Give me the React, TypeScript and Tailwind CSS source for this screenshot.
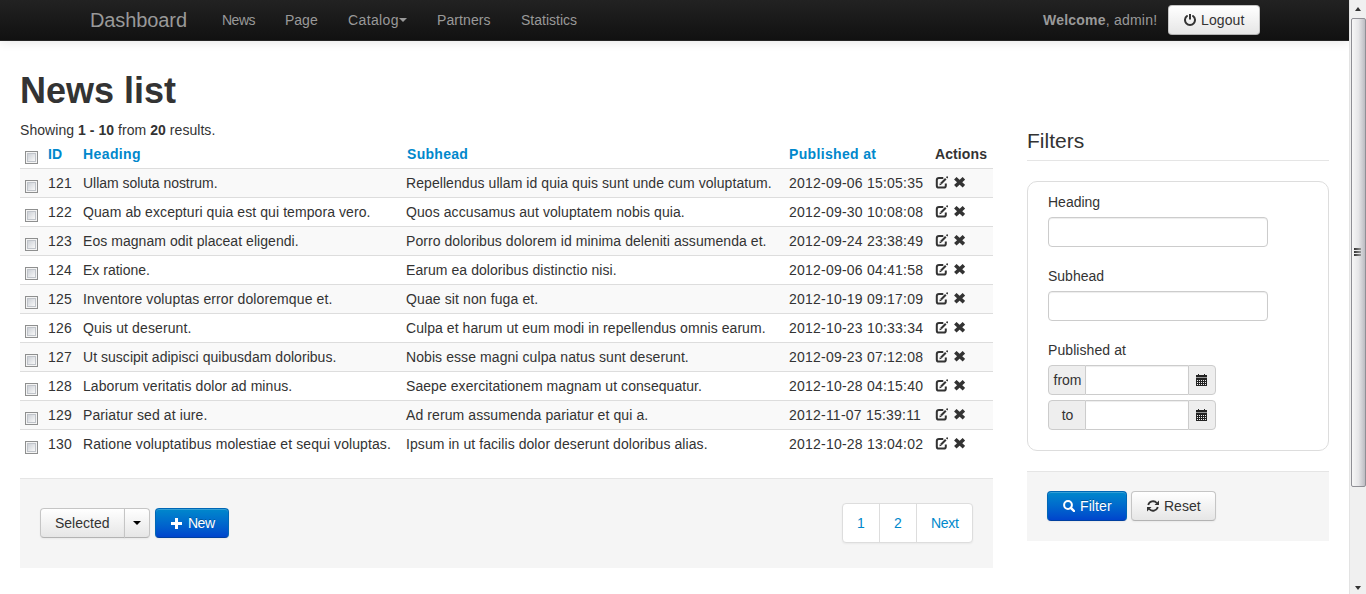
import type { ReactNode } from 'react'

type Cell = [text: string, tracking: string]

const rows: [string, Cell, Cell, string][] = [
  ['121', ['Ullam soluta nostrum.', 'tracking-[-0.04px]'], ['Repellendus ullam id quia quis sunt unde cum voluptatum.', 'tracking-[0.07px]'], '2012-09-06 15:05:35'],
  ['122', ['Quam ab excepturi quia est qui tempora vero.', 'tracking-[0.08px]'], ['Quos accusamus aut voluptatem nobis quia.', 'tracking-[0.08px]'], '2012-09-30 10:08:08'],
  ['123', ['Eos magnam odit placeat eligendi.', 'tracking-[0.05px]'], ['Porro doloribus dolorem id minima deleniti assumenda et.', 'tracking-[0.06px]'], '2012-09-24 23:38:49'],
  ['124', ['Ex ratione.', 'tracking-normal'], ['Earum ea doloribus distinctio nisi.', 'tracking-[0.06px]'], '2012-09-06 04:41:58'],
  ['125', ['Inventore voluptas error doloremque et.', 'tracking-[0.11px]'], ['Quae sit non fuga et.', 'tracking-[0.11px]'], '2012-10-19 09:17:09'],
  ['126', ['Quis ut deserunt.', 'tracking-[0.11px]'], ['Culpa et harum ut eum modi in repellendus omnis earum.', 'tracking-[0.06px]'], '2012-10-23 10:33:34'],
  ['127', ['Ut suscipit adipisci quibusdam doloribus.', 'tracking-[0.03px]'], ['Nobis esse magni culpa natus sunt deserunt.', 'tracking-[0.08px]'], '2012-09-23 07:12:08'],
  ['128', ['Laborum veritatis dolor ad minus.', 'tracking-[0.07px]'], ['Saepe exercitationem magnam ut consequatur.', 'tracking-[0.06px]'], '2012-10-28 04:15:40'],
  ['129', ['Pariatur sed at iure.', 'tracking-[0.11px]'], ['Ad rerum assumenda pariatur et qui a.', 'tracking-[0.09px]'], '2012-11-07 15:39:11'],
  ['130', ['Ratione voluptatibus molestiae et sequi voluptas.', 'tracking-[0.09px]'], ['Ipsum in ut facilis dolor deserunt doloribus alias.', 'tracking-[0.07px]'], '2012-10-28 13:04:02'],
]

const lightBtn =
  'flex h-[30px] items-center border border-[#c5c5c5] border-b-[#b3b3b3] bg-linear-to-b from-white to-[#e6e6e6] text-[#333] shadow-[inset_0_1px_0_rgba(255,255,255,.2),0_1px_2px_rgba(0,0,0,.05)]'
const blueBtn =
  'flex h-[30px] items-center rounded-[4px] border border-[#0067b5] border-b-[#003fa0] bg-linear-to-b from-[#0088cc] to-[#0044cc] text-white shadow-[inset_0_1px_0_rgba(255,255,255,.2),0_1px_2px_rgba(0,0,0,.05)] [text-shadow:0_-1px_0_rgba(0,0,0,.25)]'

function PowerIcon() {
  return (
    <svg className="h-3 w-3" viewBox="0 0 12 12" fill="none" stroke="currentColor" strokeWidth="2">
      <path d="M3 2A5 5 0 1 0 9 2" strokeLinecap="round" />
      <path d="M6 0V5.6" strokeWidth="2" />
    </svg>
  )
}

function EditIcon() {
  return (
    <svg className="h-[13px] w-[13px]" viewBox="0 0 13 13" fill="none" stroke="currentColor">
      <path d="M8.3 2H4Q1.8 2 1.8 4V9.4Q1.8 11.6 4 11.6H8.6Q10.8 11.6 10.8 9.4V7.4" strokeWidth="2" />
      <path d="M6 7.5L10.8 2.7" strokeWidth="2" />
      <path d="M11.6 1.9L12.8 .7" strokeWidth="1.8" />
      <path d="M4.4 9.2L4.9 6.9L6.8 8.7Z" fill="currentColor" stroke="none" />
    </svg>
  )
}

function RemoveIcon() {
  return (
    <svg className="h-[11px] w-[11px]" viewBox="0 0 11 11" fill="none" stroke="currentColor" strokeWidth="3.6">
      <path d="M1.3 1.3L9.9 9.3M9.9 1.3L1.3 9.3" />
    </svg>
  )
}

function CalendarIcon() {
  return (
    <svg className="mr-px h-3 w-[11px]" viewBox="0 0 11 12" shapeRendering="crispEdges">
      <path d="M2 0h1v1h5V0h1v1h2v2H0V1h2zM0 4h11v8H0z" fill="#222" />
      <path d="M0 3h11v1H0z" fill="#999" />
      {[6, 8, 10].map((y) =>
        [1, 3, 5, 7, 9].map((x) => <rect key={`${x}-${y}`} x={x} y={y} width="1" height="1" fill="#eee" />),
      )}
    </svg>
  )
}

function SearchIcon() {
  return (
    <svg className="h-3 w-3" viewBox="0 0 12 12" fill="none" stroke="currentColor">
      <circle cx="5" cy="5" r="3.9" strokeWidth="2" />
      <path d="M7.8 7.8L11 11" strokeWidth="2.4" strokeLinecap="round" />
    </svg>
  )
}

function RefreshIcon() {
  return (
    <svg className="h-3 w-3" viewBox="0 0 12 12" fill="none" stroke="currentColor" strokeWidth="1.8">
      <path d="M1.2 5A5 5 0 0 1 9.8 3M10.8 7A5 5 0 0 1 2.2 9" />
      <path d="M12 .5V5H7.5ZM0 11.5V7H4.5Z" fill="currentColor" stroke="none" />
    </svg>
  )
}

function Checkbox() {
  return (
    <span className="mt-[7px] ml-[5px] block h-[13px] w-[13px] border border-[#8e8f8f] bg-[#f4f4f4] p-px">
      <span className="block h-[9px] w-[9px] border border-[#c0c4ca] bg-linear-to-br from-[#cdd1d7] to-[#f8f8f8]" />
    </span>
  )
}

function Caret({ className }: { className: string }) {
  return <span className={`block h-0 w-0 border-x-4 border-t-4 border-x-transparent ${className}`} />
}

function DateField({ label }: { label: string }) {
  return (
    <div className="flex h-[30px] w-[168px] text-[#333]">
      <span className="flex w-[38px] items-center justify-center rounded-l-[4px] border border-[#ccc] bg-[#eee] pl-px">{label}</span>
      <span className="w-[102px] border-y border-[#ccc] bg-white shadow-[inset_0_1px_1px_rgba(0,0,0,.075)]" />
      <span className="flex w-7 items-center justify-center rounded-r-[4px] border border-[#ccc] bg-[#eee]">
        <CalendarIcon />
      </span>
    </div>
  )
}

function TextField({ label }: { label: string }) {
  return (
    <label className="block h-[74px]">
      <span className="block h-[25px]">{label}</span>
      <span className="block h-[30px] w-[220px] rounded-[4px] border border-[#ccc] bg-white shadow-[inset_0_1px_1px_rgba(0,0,0,.075)]" />
    </label>
  )
}

function NavItem({ className, children }: { className: string; children: ReactNode }) {
  return <a className={`flex h-10 items-center pl-[15px] ${className}`}>{children}</a>
}

function Navbar() {
  return (
    <header className="flex h-[41px] border-b border-[#252525] bg-linear-to-b from-[#222] to-[#111] text-[#999] shadow-[0_1px_10px_rgba(0,0,0,.1)]">
      <a className="flex h-10 w-[207px] items-center pl-[90px] text-[20px] tracking-[-0.1px]">Dashboard</a>
      <nav className="flex flex-1">
        <NavItem className="w-[63px] tracking-[-0.5px]">News</NavItem>
        <NavItem className="w-[63px]">Page</NavItem>
        <NavItem className="w-[89px] tracking-[0.38px]">
          Catalog
          <Caret className="border-t-[#999]" />
        </NavItem>
        <NavItem className="w-[84px] tracking-[0.1px]">Partners</NavItem>
        <NavItem className="w-[86px]">Statistics</NavItem>
      </nav>
      <div className="flex h-10 w-[306px] items-center">
        <span className="w-[125px] tracking-[0.22px] whitespace-nowrap"><b>Welcome</b>, admin!</span>
        <button className={`${lightBtn} w-[92px] gap-[5px] rounded-[4px] pl-[15px] tracking-[0.1px]`}>
          <PowerIcon />
          Logout
        </button>
      </div>
    </header>
  )
}

function Scrollbar() {
  return (
    <aside className="flex h-[594px] w-[17px] flex-col items-center border-l border-[#e3e3e3] bg-[#f0f0f0]">
      <div className="flex h-[18px] items-center">
        <span className="block h-0 w-0 border-x-[3.5px] border-b-4 border-x-transparent border-b-[#333]" />
      </div>
      <div className="flex h-[469px] w-[15px] flex-col items-center justify-center gap-px rounded-[2px] border border-[#8f8f95] bg-linear-to-r from-[#f7f7f7] via-[#e6e6e8] to-[#bcbcc2] pr-[2px] pb-[2px]">
        <span className="h-[2px] w-[7px] bg-linear-to-r from-[#333] to-[#999]" />
        <span className="h-[2px] w-[7px] bg-linear-to-r from-[#333] to-[#999]" />
        <span className="h-[2px] w-[7px] bg-linear-to-r from-[#333] to-[#999]" />
      </div>
      <div className="flex flex-1 items-end pb-1">
        <span className="block h-0 w-0 border-x-[3.5px] border-t-4 border-x-transparent border-t-[#333]" />
      </div>
    </aside>
  )
}

const grid = 'grid grid-cols-[28px_35px_323px_383px_146px_58px] whitespace-nowrap'

function News() {
  return (
    <main className="w-[973px]">
      <h1 className="h-[50px] text-[36px] leading-[42px] font-bold">News list</h1>
      <p className="h-5 tracking-[0.05px]">
        Showing <b>1 - 10</b> from <b>20</b> results.
      </p>
      <div className={`${grid} h-7 leading-7 font-bold text-[#0088cc]`}>
        <div className="pt-1"><Checkbox /></div>
        <span>ID</span>
        <span className="tracking-[0.4px]">Heading</span>
        <span className="pl-px tracking-[0.3px]">Subhead</span>
        <span className="tracking-[0.34px]">Published at</span>
        <span className="tracking-[0.1px] text-[#333]">Actions</span>
      </div>
      <div>
        {rows.map(([id, [heading, headingTracking], [subhead, subheadTracking], date]) => (
          <div key={id} className={`${grid} h-[29px] border-t border-[#ddd] leading-7 odd:bg-[#f9f9f9]`}>
            <div className="pt-1"><Checkbox /></div>
            <span className="tracking-[0.25px]">{id}</span>
            <span className={headingTracking}>{heading}</span>
            <span className={subheadTracking}>{subhead}</span>
            <span className="tracking-[0.22px]">{date}</span>
            <span className="flex items-center gap-[6px] pb-px">
              <EditIcon />
              <RemoveIcon />
            </span>
          </div>
        ))}
      </div>
      <div className="mt-5 flex h-[90px] justify-between border-t border-[#e5e5e5] bg-[#f5f5f5] px-5">
        <div className="mt-[29px] flex">
          <button className={`${lightBtn} w-[85px] rounded-l-[4px] pl-[14px]`}>Selected</button>
          <button className={`${lightBtn} -ml-px w-[26px] justify-center rounded-r-[4px]`}>
            <Caret className="border-t-black" />
          </button>
          <button className={`${blueBtn} ml-[5px] w-[74px] gap-[6px] pl-[15px] tracking-[-0.5px]`}>
            <svg className="h-[11px] w-[11px]" viewBox="0 0 11 11" fill="currentColor">
              <path d="M4 0h3v4h4v3H7v4H4V7H0V4h4z" />
            </svg>
            New
          </button>
        </div>
        <div className="mt-6 flex h-10 divide-x divide-[#ddd] rounded-[4px] border border-[#ddd] bg-white leading-[38px] text-[#0088cc] shadow-[0_1px_2px_rgba(0,0,0,.05)]">
          <a className="w-[37px] pl-[14px]">1</a>
          <a className="w-[37px] pl-[14px]">2</a>
          <a className="w-[55px] pl-[14px] tracking-[-0.3px]">Next</a>
        </div>
      </div>
    </main>
  )
}

function Filters() {
  return (
    <section className="mt-[50px] w-[302px]">
      <h2 className="h-[41px] border-b border-[#e5e5e5] text-[21px] leading-[42px]">Filters</h2>
      <div className="mt-5 h-[270px] rounded-[10px] border border-[#ddd] px-5 pt-[10px]">
        <TextField label="Heading" />
        <TextField label="Subhead" />
        <div className="h-[25px] tracking-[0.08px]">Published at</div>
        <DateField label="from" />
        <div className="h-[5px]" />
        <DateField label="to" />
      </div>
      <div className="mt-5 flex h-[70px] gap-1 border-t border-[#e5e5e5] bg-[#f5f5f5] px-5 pt-[19px]">
        <button className={`${blueBtn} w-20 gap-[5px] pl-[15px] tracking-[0.1px]`}>
          <SearchIcon />
          Filter
        </button>
        <button className={`${lightBtn} w-[85px] gap-[5px] rounded-[4px] pl-[15px]`}>
          <RefreshIcon />
          Reset
        </button>
      </div>
    </section>
  )
}

export default function App() {
  return (
    <div className="flex h-[594px] w-[1366px] overflow-hidden bg-white font-['Liberation_Sans',Arial,sans-serif] text-[14px] leading-5 text-[#333]">
      <div className="w-[1349px] overflow-hidden">
        <Navbar />
        <div className="mt-[29px] flex gap-[34px] pl-5">
          <News />
          <Filters />
        </div>
      </div>
      <Scrollbar />
    </div>
  )
}
